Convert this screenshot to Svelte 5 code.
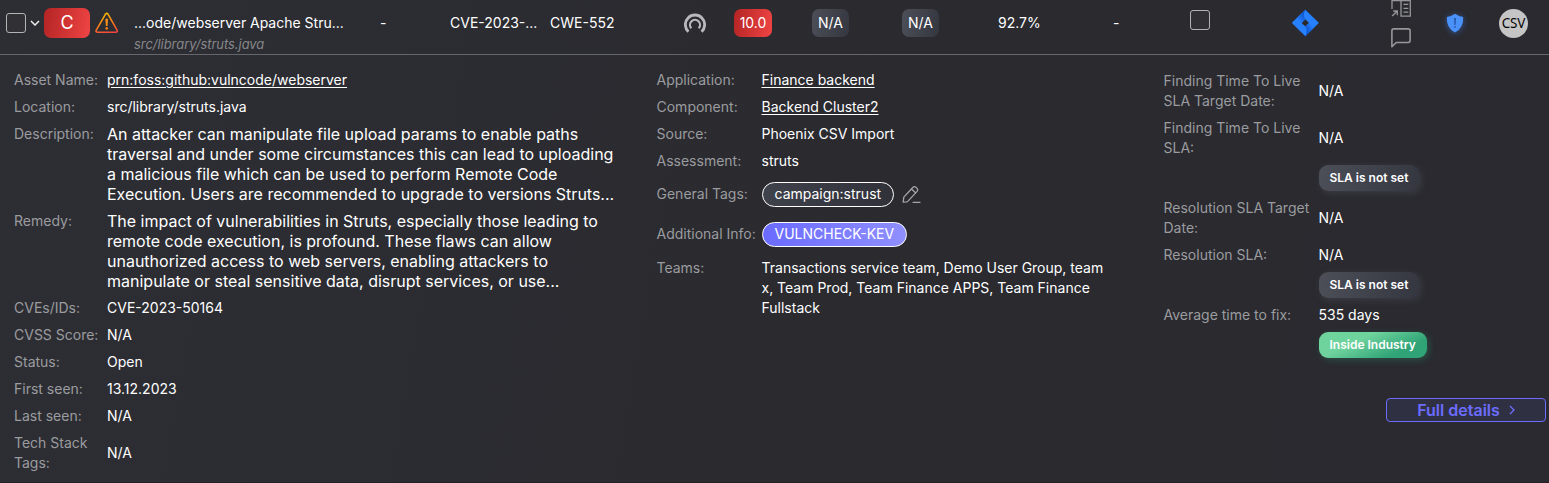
<script>
  const left = [
    { label: 'Asset Name:', value: 'prn:foss:github:vulncode/webserver', link: true },
    { label: 'Location:', value: 'src/library/struts.java' },
    {
      label: 'Description:',
      lines: [
        'An attacker can manipulate file upload params to enable paths',
        'traversal and under some circumstances this can lead to uploading',
        'a malicious file which can be used to perform Remote Code',
        'Execution. Users are recommended to upgrade to versions Struts...'
      ]
    },
    {
      label: 'Remedy:',
      lines: [
        'The impact of vulnerabilities in Struts, especially those leading to',
        'remote code execution, is profound. These flaws can allow',
        'unauthorized access to web servers, enabling attackers to',
        'manipulate or steal sensitive data, disrupt services, or use...'
      ]
    },
    { label: 'CVEs/IDs:', value: 'CVE-2023-50164' },
    { label: 'CVSS Score:', value: 'N/A' },
    { label: 'Status:', value: 'Open' },
    { label: 'First seen:', value: '13.12.2023' },
    { label: 'Last seen:', value: 'N/A' },
    { label: 'Tech Stack Tags:', value: 'N/A' }
  ];
  const middle = [
    { label: 'Application:', value: 'Finance backend', link: true },
    { label: 'Component:', value: 'Backend Cluster2', link: true },
    { label: 'Source:', value: 'Phoenix CSV Import' },
    { label: 'Assessment:', value: 'struts' }
  ];
  const right = [
    { label: 'Finding Time To Live SLA Target Date:', value: 'N/A' },
    { label: 'Finding Time To Live SLA:', value: 'N/A', pill: 'SLA is not set' },
    { label: 'Resolution SLA Target Date:', value: 'N/A' },
    { label: 'Resolution SLA:', value: 'N/A', pill: 'SLA is not set' },
    { label: 'Average time to fix:', value: '535 days', pill: 'Inside Industry', good: true }
  ];
</script>

<main>
  <header>
    <div class="cell select">
      <span class="box"></span>
      <svg width="10" height="6" viewBox="0 0 10 6"><path d="M1 1l4 4 4-4" fill="none" stroke="#eee" stroke-width="1.5" /></svg>
    </div>
    <div class="cell"><span class="critical">C</span></div>
    <div class="cell warn">
      <svg width="24" height="22" viewBox="0 0 24 22">
        <defs><linearGradient id="w" gradientUnits="userSpaceOnUse" x1="10" y1="1" x2="16" y2="22"><stop stop-color="#f3b900" /><stop offset=".5" stop-color="#f97a18" /><stop offset="1" stop-color="#f04040" /></linearGradient></defs>
        <g fill="none" stroke="url(#w)" stroke-width="1.6" stroke-linejoin="round" stroke-linecap="round">
          <path d="M10.4 2.3 1.3 18.1Q.4 20.2 2.6 20.2H20.8Q23 20.2 22.1 18.1L13.1 2.3Q11.7 .4 10.4 2.3Z" />
        </g>
        <path d="M10.4 7.2Q11.7 6 13 7.2L12.5 14H10.9Z" fill="#f99018" /><circle cx="11.7" cy="16.4" r="1.3" fill="#f97a18" />
      </svg>
    </div>
    <div class="cell name">
      <div class="title"><span class="repo">...ode/webserver</span><span>Apache Stru...</span></div>
      <em>src/library/struts.java</em>
    </div>
    <div class="cell">-</div>
    <div class="cell">CVE-2023-...</div>
    <div class="cell">CWE-552</div>
    <div class="cell">
      <svg width="22" height="22" viewBox="0 0 22 22" fill="none" stroke="#b9b9bd">
        <path d="M4.4 19.7A9.65 9.65 0 1 1 17.6 19.7" stroke-width="2.8" />
        <path d="M7.3 16.2A5 5 0 1 1 14.7 16.2" stroke-width="2.2" />
      </svg>
    </div>
    <div class="cell"><span class="score hot">10.0</span></div>
    <div class="cell"><span class="score">N/A</span></div>
    <div class="cell"><span class="score">N/A</span></div>
    <div class="cell">92.7%</div>
    <div class="cell">-</div>
    <div class="cell raised"><span class="box"></span></div>
    <div class="cell">
      <svg width="27" height="28" viewBox="0 0 27 28">
        <defs>
          <linearGradient id="j1" gradientUnits="userSpaceOnUse" x1="13.3" y1="5" x2="5.5" y2="11"><stop stop-color="#0a50c8" /><stop offset="1" stop-color="#2680ff" /></linearGradient>
          <linearGradient id="j2" gradientUnits="userSpaceOnUse" x1="13.3" y1="22" x2="21" y2="17"><stop stop-color="#0a50c8" /><stop offset="1" stop-color="#2680ff" /></linearGradient>
        </defs>
        <path fill="#2680ff" fill-rule="evenodd" d="M13.3.7 26.3 13.2Q26.9 13.9 26.3 14.6L13.3 27.3.4 14.6Q-.2 13.9.4 13.2ZM13.3 10.2 9.6 13.9 13.3 17.6 17 13.9Z" />
        <path fill="url(#j1)" d="M13.3.7Q10.4 6 13.3 10.2L9.6 13.9 5 9Z" />
        <path fill="url(#j2)" d="M13.3 27.3Q16.2 22 13.3 17.6L17 13.9 21.7 18.8Z" />
      </svg>
    </div>
    <div class="cell stack">
      <svg width="20" height="20" viewBox="0 0 20 20" fill="none" stroke="#96979a" stroke-width="1.3">
        <path d="M1 11V2.7H9.5M10 2.7H19.3V18.2H10ZM12.5 6.4H17.3M12.5 10.3H17.3M12.5 14.2H17.3M1.2 18 6 13.2M2.2 13H6.3V17.3" />
      </svg>
      <svg width="20" height="20" viewBox="0 0 20 20" fill="none" stroke="#96979a" stroke-width="1.6" stroke-linejoin="round">
        <path d="M.9 18.8V2.8Q.9 .9 2.8 .9H17.2Q19.1 .9 19.1 2.8V12.6Q19.1 14.5 17.2 14.5H5.2Z" />
      </svg>
    </div>
    <div class="cell">
      <svg class="shield" width="18" height="20" viewBox="0 0 18 20">
        <path fill="#4b91fa" d="M9 .7Q13 3.5 17.2 3.9 17.8 15 9 19.4.2 15 .8 3.9 5 3.5 9 .7Z" />
        <path fill="#2456a6" d="M8.1 5H9.9L9.6 12H8.4ZM8.2 13.2H9.8V14.8H8.2Z" />
      </svg>
    </div>
    <div class="cell"><span class="csv">CSV</span></div>
  </header>

  <section class="details">
    <div class="list left">
      {#each left as row}
        <div class="row">
          <div class="label">{row.label}</div>
          {#if row.lines}
            <div class="long">{#each row.lines as line}<div>{line}</div>{/each}</div>
          {:else}
            <div class="value"><span class:link={row.link}>{row.value}</span></div>
          {/if}
        </div>
      {/each}
    </div>

    <div class="list middle">
      {#each middle as row}
        <div class="row">
          <div class="label">{row.label}</div>
          <div class="value"><span class:link={row.link}>{row.value}</span></div>
        </div>
      {/each}
      <div class="row tags">
        <div class="label">General Tags:</div>
        <div class="value">
          <span class="tag">campaign:strust</span>
          <svg width="19" height="19" viewBox="0 0 19 19" fill="none" stroke="#a5a6a9" stroke-width="1.3" stroke-linejoin="round" stroke-linecap="round">
            <path d="M1.2 17.2 1.8 12.1 11 2.3Q12.4 .9 13.9 2.2L15.3 3.6Q16.4 5 15.1 6.4L6 16.1Q5.5 16.6 4.8 16.8ZM9.5 4 13.5 7.8M11 17.3H18" />
          </svg>
        </div>
      </div>
      <div class="row tags info">
        <div class="label">Additional Info:</div>
        <div class="value"><span class="tag kev">VULNCHECK-KEV</span></div>
      </div>
      <div class="row">
        <div class="label">Teams:</div>
        <div class="value teams">Transactions service team, Demo User Group, team x, Team Prod, Team Finance APPS, Team Finance Fullstack</div>
      </div>
    </div>

    <div class="list right">
      {#each right as row}
        <div class="row">
          <div class="label">{row.label}</div>
          <div class="value">{row.value}</div>
        </div>
        {#if row.pill}
          <div class="pill" class:good={row.good}>{row.pill}</div>
        {/if}
      {/each}
      <button>
        <span>Full details</span>
        <svg width="6" height="10" viewBox="0 0 6 10"><path d="M1 1l4 4-4 4" fill="none" stroke="#6c6cff" stroke-width="1.3" /></svg>
      </button>
    </div>
  </section>
</main>

<style>
  :global(body) { margin: 0; background: #2b2b31; }
  main {
    box-sizing: border-box;
    width: 1549px;
    height: 483px;
    overflow: hidden;
    background: linear-gradient(100deg, #2d2e34 0%, #2a2a2f 55%, #2a2a30 100%);
    border-bottom: 1px solid #232126;
    color: #fff;
    font: 14px/20px Inter, sans-serif;
  }
  header {
    display: grid;
    grid-template-columns: 44px 51px 39px 246px 70px 100px 134px 50px 78px 90px 96px 115px 77px 102px 99px 55px 53px 50px;
    height: 54px;
    border-bottom: 1px solid #66676c;
  }
  .cell { display: flex; align-items: center; height: 46px; white-space: nowrap; }
  svg { display: block; flex: none; }
  .box {
    box-sizing: border-box;
    width: 20px;
    height: 20px;
    border: 1px solid #b4b4b6;
    border-radius: 3px;
    background: #303035;
  }
  .select { padding-left: 6px; gap: 4px; }
  .raised { height: 40px; }
  .critical {
    width: 46px;
    height: 30px;
    border-radius: 7px;
    background: linear-gradient(100deg, #b32424, #f04444);
    font-size: 18px;
    line-height: 30px;
    text-align: center;
  }
  .name { flex-direction: column; align-items: flex-start; padding-top: 13px; height: 41px; }
  .title { display: flex; }
  .repo { width: 116px; }
  em { color: #86878a; font-size: 12.9px; line-height: 24px; }
  .score {
    width: 37px;
    height: 28px;
    border-radius: 7px;
    background: linear-gradient(100deg, #4c4e58, #343640);
    line-height: 28px;
    text-align: center;
  }
  .hot { width: 38px; background: linear-gradient(100deg, #b32424, #f04444); }
  .stack { flex-direction: column; align-items: flex-start; justify-content: flex-start; gap: 10px; height: 54px; margin-top: -2px; }
  .shield { filter: drop-shadow(0 1px 3px #3c82f080); }
  .csv {
    width: 29px;
    height: 29px;
    border-radius: 50%;
    background: #c6c5c5;
    color: #050505;
    font: 13.5px/28px "Noto Sans", sans-serif;
    letter-spacing: -0.2px;
    text-align: center;
  }
  .details { display: grid; grid-template-columns: 642.5px 507px 399.5px; padding-top: 15px; }
  .list { display: flex; flex-direction: column; gap: 7px; }
  .row { display: grid; align-items: center; }
  .label { color: #9b9c9f; }
  .left .row { grid-template-columns: 93px 1fr; margin-left: 14px; }
  .left .row:has(.long) { align-items: start; }
  .long { font-size: 16px; line-height: 20px; white-space: nowrap; }
  .link { text-decoration: underline; text-underline-offset: 2px; }
  .middle .row { grid-template-columns: 105px 1fr; margin-left: 14px; align-items: start; }
  .middle .tags { margin-top: 4px; align-items: center; white-space: nowrap; }
  .middle .info { margin-top: 8px; margin-bottom: 4px; }
  .tags .label { margin-bottom: 1px; }
  .tags .value { display: flex; align-items: center; gap: 8px; }
  .tag {
    box-sizing: border-box;
    height: 25px;
    padding: 0 12px;
    border: 1px solid #fff;
    border-radius: 13px;
    background: linear-gradient(100deg, #40424c, #303139);
    line-height: 22px;
  }
  .kev { background: linear-gradient(100deg, #6a6aff, #9090ff); }
  .teams { width: 346px; }
  .right { padding-top: 1px; }
  .right .row { grid-template-columns: 155px 1fr; margin-left: 14px; }
  .right .label { width: 148px; }
  .pill {
    align-self: flex-start;
    height: 26px;
    margin-left: 169.5px;
    padding: 0 11px 0 10.5px;
    border-radius: 9px;
    background: linear-gradient(100deg, #4c4e58, #343640);
    box-shadow: 2px 2px 7px #55566070;
    font-size: 12px;
    font-weight: 600;
    line-height: 26px;
  }
  .good { background: linear-gradient(155deg, #6fd39d 35%, #30a477 75%); box-shadow: 2px 2px 7px #30a47750; }
  button {
    display: flex;
    align-items: center;
    justify-content: center;
    gap: 9px;
    align-self: flex-end;
    box-sizing: border-box;
    width: 160px;
    height: 24px;
    margin: 33px 3px 0 0;
    padding: 0;
    border: 1px solid #6c6cff;
    border-radius: 4px;
    background: #303043;
    color: #6c6cff;
    font: 600 16px/22px Inter, sans-serif;
  }
</style>
